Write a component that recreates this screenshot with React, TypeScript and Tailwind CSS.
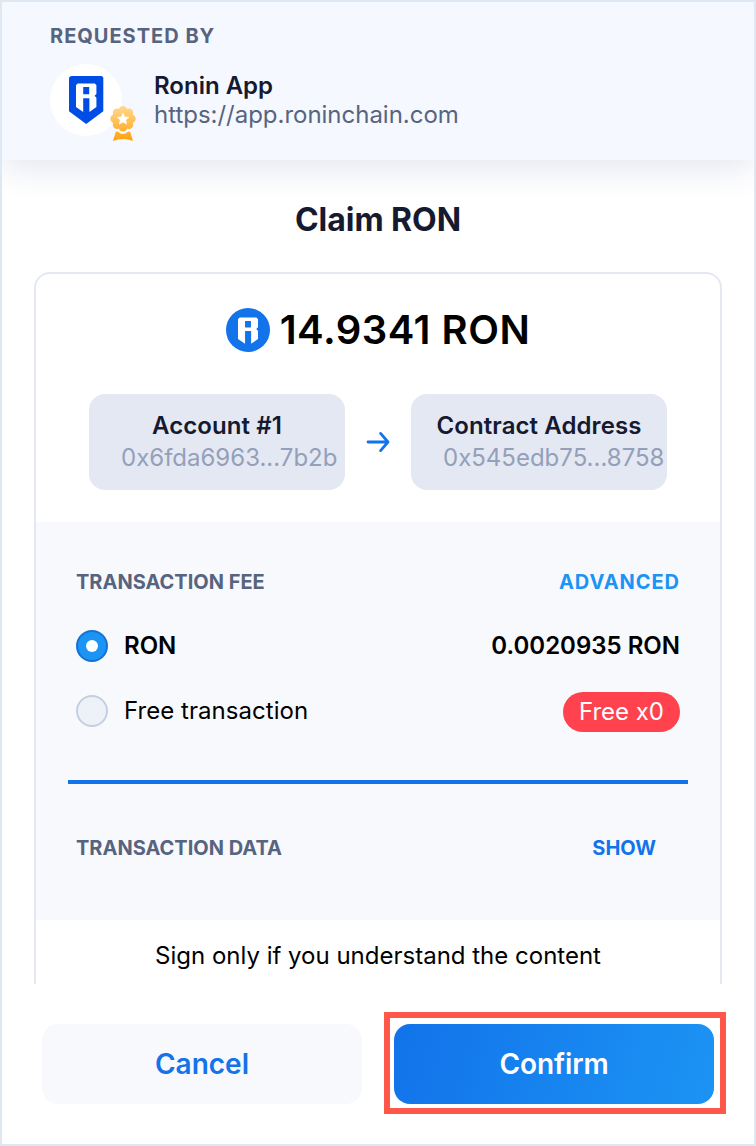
const R_MARK =
  "M1.6 0H18.8L20.4 1.8V10.6L18.6 12.4L20.4 14.4V23.6L13.4 28.6V14.8H7.2V28.6L0 23.6V1.8ZM7.2 3.6V10.8H13.2V3.6Z";

function Shield() {
  return (
    <svg className="h-12 w-[35px]" viewBox="0 0 35 48">
      <path d="M3 0H32Q34.3 0 34.3 2.6V35.2L17.2 48L0 35.2V2.6Q0 0 3 0Z" fill="#004de5" />
      <path d={R_MARK} fill="#fff" fillRule="evenodd" transform="translate(7 7.4)" />
    </svg>
  );
}

function Medal() {
  return (
    <svg className="absolute left-[60px] top-[42px] h-[35px] w-[26px]" viewBox="0 0 26 35">
      <defs>
        <linearGradient id="gold" x1="0" y1="0" x2="0" y2="35" gradientUnits="userSpaceOnUse">
          <stop offset="0" stopColor="#ffd991" />
          <stop offset="1" stopColor="#ffa10a" />
        </linearGradient>
      </defs>
      <g fill="url(#gold)">
        <circle cx="13" cy="12.7" r="10.4" />
        <circle cx="13" cy="4.3" r="4.2" />
        <circle cx="19" cy="6.7" r="4.2" />
        <circle cx="21.5" cy="12.7" r="4.2" />
        <circle cx="19" cy="18.7" r="4.2" />
        <circle cx="13" cy="21.2" r="4.2" />
        <circle cx="7" cy="18.7" r="4.2" />
        <circle cx="4.5" cy="12.7" r="4.2" />
        <circle cx="7" cy="6.7" r="4.2" />
        <path d="M5.8 25.8H8.2C11 28.8 15 28.8 17.8 25.8H20.2L23 35C16.5 32.3 9.5 32.3 3 35Z" />
      </g>
      <path
        d="M13 7.2L14.7 10.9L18.8 11.3L15.8 14.1L16.6 18.1L13 16.1L9.4 18.1L10.2 14.1L7.2 11.3L11.3 10.9Z"
        fill="#fff"
        stroke="#fff"
        strokeWidth="0.6"
        strokeLinejoin="round"
      />
    </svg>
  );
}

function Coin() {
  return (
    <svg className="h-11 w-11" viewBox="0 0 44 44">
      <circle cx="22" cy="22" r="22" fill="#1273ea" />
      <path d={R_MARK} fill="#fff" fillRule="evenodd" transform="translate(12 9.6) scale(0.98 0.91)" />
    </svg>
  );
}

function AddressBox({ name, address }: { name: string; address: string }) {
  return (
    <div className="h-24 w-64 rounded-2xl bg-[#e4e8f3] pt-4">
      <div className="text-center text-2xl leading-8 font-semibold tracking-[0.08px] text-[#151a30]">{name}</div>
      <div className="ml-8 text-2xl leading-8 whitespace-nowrap text-[#94a0ba]">{address}</div>
    </div>
  );
}

export default function App() {
  return (
    <div className="flex h-[1146px] w-[756px] flex-col overflow-hidden border-2 border-[#dfe7f3] bg-white font-['Inter',sans-serif] text-black">
      <header className="h-[158px] shrink-0 bg-[#f5f8fe] pl-12 pt-5 shadow-[0_8px_32px_rgba(28,50,120,0.12)]">
        <div className="text-xl leading-7 font-bold tracking-[1px] text-[#57647f]">REQUESTED BY</div>
        <div className="mt-[14px] flex gap-8">
          <div className="relative flex h-[72px] w-[72px] justify-center rounded-full bg-white pt-3">
            <Shield />
            <Medal />
          </div>
          <div className="pt-[7px]">
            <div className="text-2xl leading-[29px] font-semibold text-[#151a30]">Ronin App</div>
            <div className="text-2xl leading-[29px] tracking-[-0.02px] text-[#57647f]">https://app.roninchain.com</div>
          </div>
        </div>
      </header>

      <h1 className="mt-10 text-center text-[32px] leading-10 font-bold tracking-[-0.05px] text-[#151a30]">Claim RON</h1>

      <main className="mx-8 mt-8 flex h-[712px] shrink-0 flex-col overflow-hidden rounded-t-2xl border-2 border-b-0 border-[#e4e8f3]">
        <section className="h-[248px] shrink-0">
          <div className="mt-[34px] flex h-11 items-center justify-center gap-[10px]">
            <Coin />
            <span className="text-[40px] leading-11 font-semibold tracking-[0.5px]">14.9341 RON</span>
          </div>
          <div className="mt-[42px] flex items-center pl-[53px]">
            <AddressBox name="Account #1" address="0x6fda6963...7b2b" />
            <svg className="mx-[21px] h-6 w-6" viewBox="0 0 24 24" fill="none" stroke="#1273ea" strokeWidth="2.8" strokeLinecap="round" strokeLinejoin="round">
              <path d="M2 12H22L14.6 3.4M22 12L14.6 20.6" />
            </svg>
            <AddressBox name="Contract Address" address="0x545edb75...8758" />
          </div>
        </section>

        <section className="h-[398px] shrink-0 bg-[#f8f9fd] px-8 pt-[46px]">
          <div className="flex justify-between px-2 text-xl leading-7 font-bold">
            <span className="text-[#57647f]">TRANSACTION FEE</span>
            <span className="tracking-[0.95px] text-[#1c94f4]">ADVANCED</span>
          </div>
          <div className="mt-[34px] flex h-8 items-center px-2 text-2xl font-semibold">
            <span className="mr-4 flex h-8 w-8 items-center justify-center rounded-full border-2 border-[#1472d6] bg-[#1c94f4]">
              <span className="h-3 w-3 rounded-full bg-white" />
            </span>
            <span>RON</span>
            <span className="ml-auto">0.0020935 RON</span>
          </div>
          <div className="mt-[29px] flex h-10 items-center px-2 text-2xl">
            <span className="mr-4 h-8 w-8 rounded-full border-2 border-[#c6cee1] bg-[#edf1f8]" />
            <span className="tracking-[0.05px]">Free transaction</span>
            <span className="mt-[2px] ml-auto flex h-10 items-center rounded-full bg-[#ff424e] px-4 text-white">Free x0</span>
          </div>
          <div className="mt-[49px] h-1 bg-[#1273ea]" />
          <div className="mt-[50px] flex justify-between pr-8 pl-2 text-xl leading-7 font-bold">
            <span className="text-[#57647f]">TRANSACTION DATA</span>
            <span className="text-[#1273ea]">SHOW</span>
          </div>
        </section>
        <p className="pt-5 text-center text-2xl leading-8">Sign only if you understand the content</p>
      </main>

      <footer className="flex pt-7 pl-10 text-[28px] font-semibold">
        <button className="mt-3 h-20 w-80 rounded-2xl bg-[#f8f9fd] text-[#1273ea]">Cancel</button>
        <div className="ml-[22px] h-[102px] w-[342px] shrink-0 border-[6px] border-[#ff584b] pt-[6px] pl-1">
          <button className="h-20 w-80 rounded-2xl bg-linear-[105deg,#1273ea,#1c94f4] tracking-[-0.1px] text-white">Confirm</button>
        </div>
      </footer>
    </div>
  );
}
